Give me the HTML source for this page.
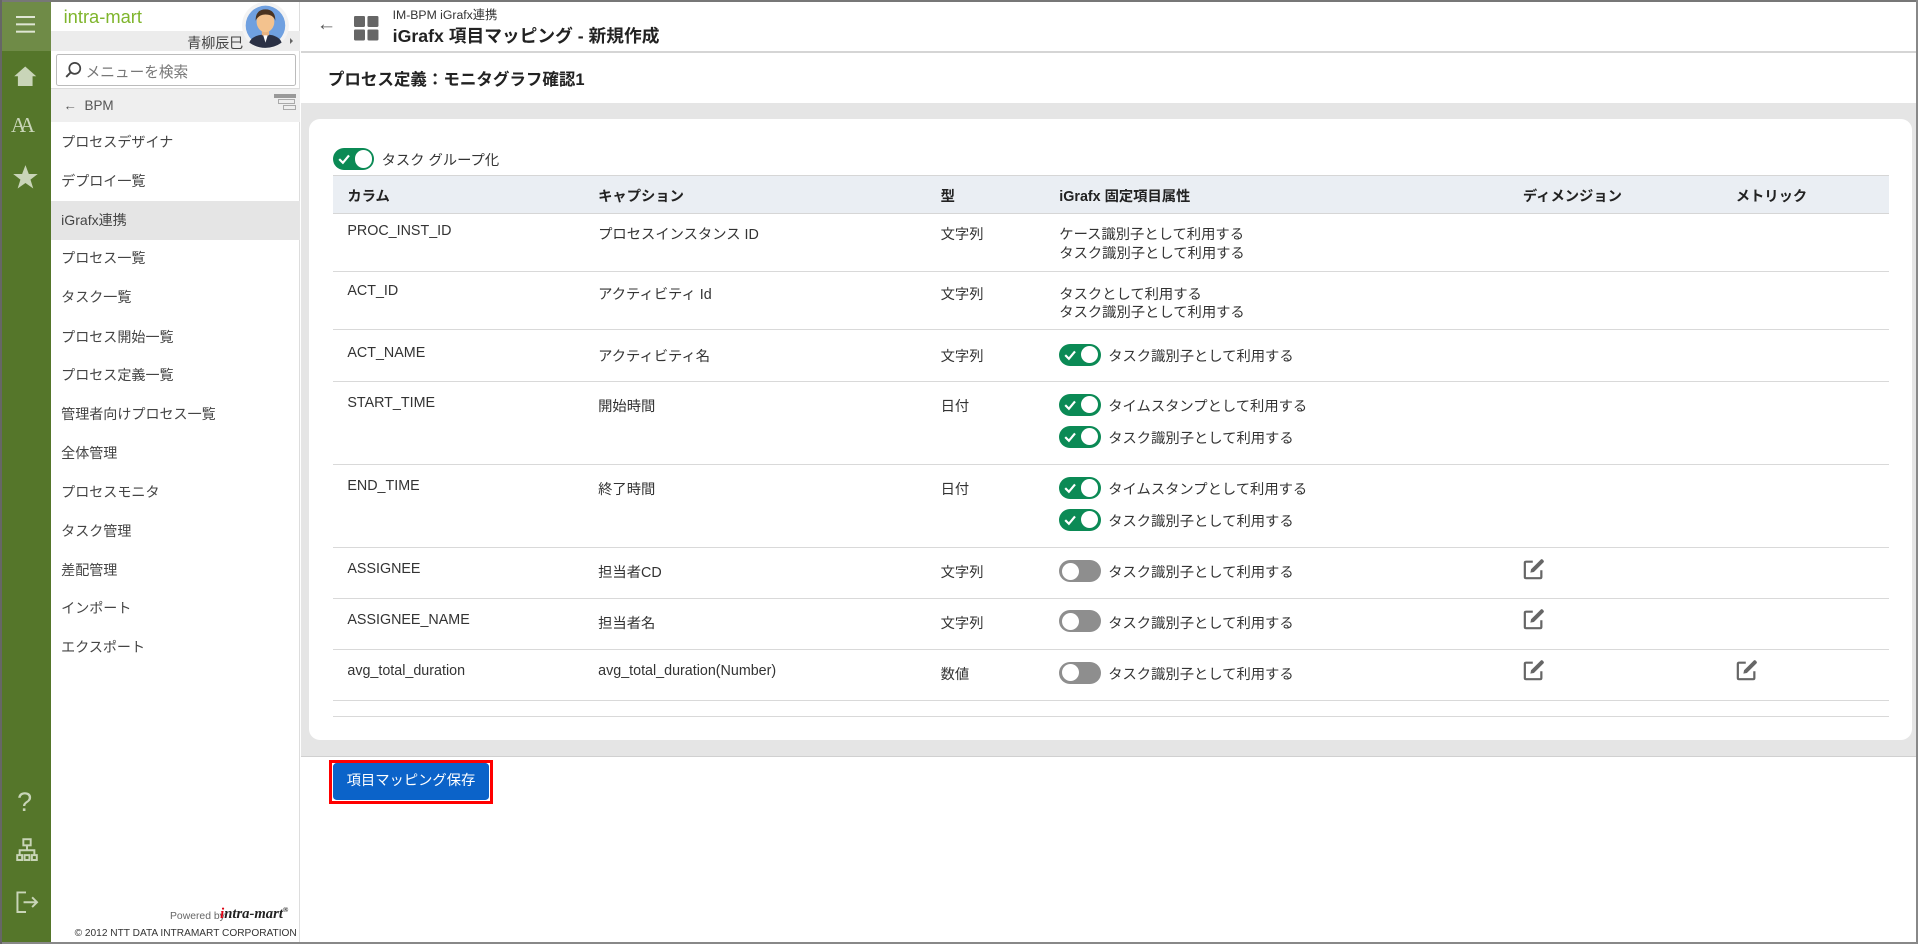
<!DOCTYPE html>
<html><head><meta charset="utf-8">
<style>
*{margin:0;padding:0;box-sizing:border-box}
html,body{width:1918px;height:944px;overflow:hidden;background:#fff}
#z{zoom:1.2232;width:1568px;height:772px;position:relative;font-family:"Liberation Sans","Noto Sans CJK JP",sans-serif;color:#333;font-size:12px}
.a{position:absolute;white-space:nowrap}
.ib{position:absolute;left:0;top:0;width:42px;height:772px;background:#55762a}
.menu{position:absolute;left:50px;font-size:11.5px;color:#444}
.tg{position:absolute;width:34px;height:18px;border-radius:9px;background:#0b8a55}
.tg::after{content:"";position:absolute;right:2px;top:2px;width:14px;height:14px;border-radius:50%;background:#fff}
.tg.off{background:#8e8e8e}
.tg.off::after{right:auto;left:2px}
.tg svg{position:absolute;left:4px;top:4px}
.row{position:absolute;left:272px;width:1272px;border-bottom:1px solid #d9d9d9}
.c{position:absolute;font-size:11.7px;color:#333;white-space:nowrap}
.lbl{position:absolute;font-size:11.7px;color:#333;white-space:nowrap}
</style></head><body><div id="z">
<!-- frame -->
<div class="a" style="left:0;top:0;width:1568px;height:2px;background:#777;z-index:5"></div>
<div class="a" style="left:1566px;top:0;width:2px;height:772px;background:#888;z-index:5"></div>
<div class="a" style="left:0;top:770px;width:1568px;height:2px;background:#888;z-index:5"></div>
<div class="a" style="left:0;top:0;width:2px;height:772px;background:#666;z-index:5"></div>
<!-- icon bar -->
<div class="ib"></div>
<div class="a" style="left:0;top:0;width:42px;height:42px;background:#6f8b47"></div>
<div class="a" style="left:13px;top:13px;width:16px;height:2px;background:#dfe6d4;box-shadow:0 6px 0 #dfe6d4,0 12px 0 #dfe6d4"></div>
<svg class="a" style="left:11px;top:52px" width="20" height="20" viewBox="0 0 20 20"><path d="M10 2 L19 10 H16 V18 H4 V10 H1 Z" fill="#c9d5b8"/></svg>
<div class="a" style="left:9px;top:93px;font-family:'Liberation Serif',serif;font-size:17px;color:#c9d5b8;letter-spacing:-5px">AA</div>
<svg class="a" style="left:10px;top:134px" width="22" height="21" viewBox="0 0 24 23"><path d="M12 1 L15 9 L23 9 L16.5 14 L19 22 L12 17 L5 22 L7.5 14 L1 9 L9 9 Z" fill="#c9d5b8"/></svg>
<div class="a" style="left:14px;top:643px;font-size:22px;color:#c9d5b8">?</div>
<svg class="a" style="left:13px;top:685px" width="18" height="20" viewBox="0 0 18 20"><g fill="none" stroke="#c9d5b8" stroke-width="1.6"><rect x="6" y="1" width="6" height="5"/><rect x="1" y="14" width="4" height="4"/><rect x="7" y="14" width="4" height="4"/><rect x="13" y="14" width="4" height="4"/><path d="M9 6 V10 M3 14 V10 H15 V14"/></g></svg>
<svg class="a" style="left:12px;top:728px" width="20" height="20" viewBox="0 0 20 20"><g fill="none" stroke="#c9d5b8" stroke-width="1.6"><path d="M9 2 H2 V18 H9"/><path d="M7 10 H18 M14 6 L18 10 L14 14"/></g></svg>
<!-- sidebar -->
<div class="a" style="left:42px;top:0;width:203px;height:772px;background:#fff;border-right:1px solid #ddd"></div>
<div class="a" style="left:52px;top:5px;font-size:15px;color:#7fb52c">intra-mart</div>
<div class="a" style="left:42px;top:25px;width:203px;height:17px;background:#ececec"></div>
<div class="a" style="left:153px;top:27px;font-size:11.5px;color:#444">青柳辰巳</div>
<div class="a" style="left:237px;top:31px;width:0;height:0;border-left:3px solid #666;border-top:3px solid transparent;border-bottom:3px solid transparent"></div>
<svg class="a" style="left:197px;top:1px" width="40" height="40" viewBox="0 0 47 47"><circle cx="23.5" cy="23.5" r="22.5" fill="#f3f3f3"/><circle cx="23.5" cy="23.5" r="19" fill="#6fa0e0"/><path d="M8 40 Q10 33 23.5 32 Q37 33 39 40 Q32 45 23.5 45 Q15 45 8 40Z" fill="#2b3145"/><path d="M21 32 L23.5 40 L26 32Z" fill="#fff"/><rect x="20" y="26" width="7" height="7" fill="#e8b27f"/><ellipse cx="23.5" cy="20" rx="8.5" ry="10" fill="#f3c28e"/><path d="M14 19 Q14 8 23.5 8 Q33 8 33 19 Q31 13 23.5 13 Q17 13 14 19Z" fill="#4a3320"/></svg>
<div class="a" style="left:46px;top:44px;width:196px;height:26px;border:1px solid #bbb;border-radius:2px;background:#fff"></div>
<svg class="a" style="left:53px;top:50px" width="14" height="14" viewBox="0 0 14 14"><circle cx="8" cy="6" r="4.5" fill="none" stroke="#444" stroke-width="1.4"/><path d="M4.8 9.2 L1 13" stroke="#444" stroke-width="1.6"/></svg>
<div class="a" style="left:70px;top:50px;font-size:12px;color:#777">メニューを検索</div>
<div class="a" style="left:42px;top:72px;width:203px;height:28px;background:#efefef;border-top:1px solid #ddd"></div>
<div class="a" style="left:52px;top:80px;font-size:11px;color:#555">←&nbsp;&nbsp;BPM</div>
<div class="a" style="left:224px;top:77px;width:18px;height:3px;background:#999"></div>
<div class="a" style="left:227px;top:81px;width:14px;height:4px;border:1px solid #aaa"></div>
<div class="a" style="left:231px;top:86px;width:11px;height:4px;border:1px solid #aaa"></div>
<div class="a" style="left:42px;top:164px;width:203px;height:32px;background:#e5e5e5"></div>
<div class="menu" style="top:108px">プロセスデザイナ</div>
<div class="menu" style="top:140px">デプロイ一覧</div>
<div class="menu" style="top:172px">iGrafx連携</div>
<div class="menu" style="top:203px">プロセス一覧</div>
<div class="menu" style="top:235px">タスク一覧</div>
<div class="menu" style="top:267px">プロセス開始一覧</div>
<div class="menu" style="top:298px">プロセス定義一覧</div>
<div class="menu" style="top:330px">管理者向けプロセス一覧</div>
<div class="menu" style="top:362px">全体管理</div>
<div class="menu" style="top:394px">プロセスモニタ</div>
<div class="menu" style="top:426px">タスク管理</div>
<div class="menu" style="top:458px">差配管理</div>
<div class="menu" style="top:489px">インポート</div>
<div class="menu" style="top:521px">エクスポート</div>
<div class="a" style="left:139px;top:745px;font-size:8.5px;color:#666">Powered by</div>
<div class="a" style="left:180px;top:740px;font-family:'Liberation Serif',serif;font-weight:bold;font-style:italic;font-size:12px;color:#222"><span style="color:#d01">i</span>ntra-mart<sup style="font-size:6px">®</sup></div>
<div class="a" style="left:61px;top:759px;font-size:8.3px;color:#333">© 2012 NTT DATA INTRAMART CORPORATION</div>
<!-- header -->
<div class="a" style="left:246px;top:42px;width:1320px;height:1px;background:#d5d5d5"></div>
<div class="a" style="left:259px;top:11px;font-size:16px;color:#555">←</div>
<div class="a" style="left:289px;top:13px;width:9px;height:9px;background:#666;border-radius:1px;box-shadow:11px 0 0 #666,0 11px 0 #666,11px 11px 0 #666"></div>
<div class="a" style="left:321px;top:4px;font-size:10px;color:#333">IM-BPM iGrafx連携</div>
<div class="a" style="left:321px;top:18px;font-size:14.5px;font-weight:bold;color:#222">iGrafx 項目マッピング - 新規作成</div>
<div class="a" style="left:268px;top:54px;font-size:13.5px;font-weight:bold;color:#222">プロセス定義：モニタグラフ確認1</div>
<!-- grey area -->
<div class="a" style="left:246px;top:84px;width:1320px;height:534px;background:#e5e5e5"></div>
<div class="a" style="left:246px;top:618px;width:1320px;height:1px;background:#d0d0d0"></div>
<div class="a" style="left:253px;top:97px;width:1310px;height:508px;background:#fff;border-radius:9px"></div>
<div class="tg" style="left:272px;top:121px"><svg width="10" height="10" viewBox="0 0 10 10"><path d="M1 5 L4 8 L9 2" fill="none" stroke="#fff" stroke-width="1.8"/></svg></div>
<div class="lbl" style="left:312px;top:122px">タスク グループ化</div>
<!-- table header -->
<div class="a" style="left:272px;top:143px;width:1272px;height:32px;background:#eaeef3;border-top:1px solid #d6d6d6;border-bottom:1px solid #d6d6d6"></div>
<div class="c" style="left:284px;top:151px;font-weight:bold;color:#222">カラム</div>
<div class="c" style="left:489px;top:151px;font-weight:bold;color:#222">キャプション</div>
<div class="c" style="left:769px;top:151px;font-weight:bold;color:#222">型</div>
<div class="c" style="left:866px;top:151px;font-weight:bold;color:#222">iGrafx 固定項目属性</div>
<div class="c" style="left:1245px;top:151px;font-weight:bold;color:#222">ディメンジョン</div>
<div class="c" style="left:1419px;top:151px;font-weight:bold;color:#222">メトリック</div>
<!-- rows -->
<div class="row" style="top:174px;height:48px"></div>
<div class="c" style="left:284px;top:182px">PROC_INST_ID</div><div class="c" style="left:489px;top:182px">プロセスインスタンス ID</div><div class="c" style="left:769px;top:182px">文字列</div>
<div class="c" style="left:866px;top:182px">ケース識別子として利用する</div><div class="c" style="left:866px;top:198px">タスク識別子として利用する</div>
<div class="row" style="top:221px;height:49px"></div>
<div class="c" style="left:284px;top:231px">ACT_ID</div><div class="c" style="left:489px;top:231px">アクティビティ Id</div><div class="c" style="left:769px;top:231px">文字列</div>
<div class="c" style="left:866px;top:231px">タスクとして利用する</div><div class="c" style="left:866px;top:246px">タスク識別子として利用する</div>
<div class="row" style="top:269px;height:43px"></div>
<div class="c" style="left:284px;top:282px">ACT_NAME</div><div class="c" style="left:489px;top:282px">アクティビティ名</div><div class="c" style="left:769px;top:282px">文字列</div>
<div class="tg" style="left:866px;top:281px"><svg width="10" height="10" viewBox="0 0 10 10"><path d="M1 5 L4 8 L9 2" fill="none" stroke="#fff" stroke-width="1.8"/></svg></div><div class="c" style="left:906px;top:282px">タスク識別子として利用する</div>
<div class="row" style="top:311px;height:69px"></div>
<div class="c" style="left:284px;top:323px">START_TIME</div><div class="c" style="left:489px;top:323px">開始時間</div><div class="c" style="left:769px;top:323px">日付</div>
<div class="tg" style="left:866px;top:322px"><svg width="10" height="10" viewBox="0 0 10 10"><path d="M1 5 L4 8 L9 2" fill="none" stroke="#fff" stroke-width="1.8"/></svg></div><div class="c" style="left:906px;top:323px">タイムスタンプとして利用する</div>
<div class="tg" style="left:866px;top:348px"><svg width="10" height="10" viewBox="0 0 10 10"><path d="M1 5 L4 8 L9 2" fill="none" stroke="#fff" stroke-width="1.8"/></svg></div><div class="c" style="left:906px;top:349px">タスク識別子として利用する</div>
<div class="row" style="top:379px;height:69px"></div>
<div class="c" style="left:284px;top:391px">END_TIME</div><div class="c" style="left:489px;top:391px">終了時間</div><div class="c" style="left:769px;top:391px">日付</div>
<div class="tg" style="left:866px;top:390px"><svg width="10" height="10" viewBox="0 0 10 10"><path d="M1 5 L4 8 L9 2" fill="none" stroke="#fff" stroke-width="1.8"/></svg></div><div class="c" style="left:906px;top:391px">タイムスタンプとして利用する</div>
<div class="tg" style="left:866px;top:416px"><svg width="10" height="10" viewBox="0 0 10 10"><path d="M1 5 L4 8 L9 2" fill="none" stroke="#fff" stroke-width="1.8"/></svg></div><div class="c" style="left:906px;top:417px">タスク識別子として利用する</div>
<div class="row" style="top:447px;height:43px"></div>
<div class="c" style="left:284px;top:459px">ASSIGNEE</div><div class="c" style="left:489px;top:459px">担当者CD</div><div class="c" style="left:769px;top:459px">文字列</div>
<div class="tg off" style="left:866px;top:458px"></div><div class="c" style="left:906px;top:459px">タスク識別子として利用する</div>
<div class="row" style="top:489px;height:42px"></div>
<div class="c" style="left:284px;top:500px">ASSIGNEE_NAME</div><div class="c" style="left:489px;top:500px">担当者名</div><div class="c" style="left:769px;top:500px">文字列</div>
<div class="tg off" style="left:866px;top:499px"></div><div class="c" style="left:906px;top:500px">タスク識別子として利用する</div>
<div class="row" style="top:530px;height:43px"></div>
<div class="c" style="left:284px;top:542px">avg_total_duration</div><div class="c" style="left:489px;top:542px">avg_total_duration(Number)</div><div class="c" style="left:769px;top:542px">数値</div>
<div class="tg off" style="left:866px;top:541px"></div><div class="c" style="left:906px;top:542px">タスク識別子として利用する</div>
<div class="row" style="top:572px;height:14px"></div>
<!-- edit icons -->
<svg class="a" style="left:1245px;top:456px" width="19" height="18" viewBox="0 0 19 18"><path d="M8 3 H2.5 Q1.5 3 1.5 4 V15.5 Q1.5 16.5 2.5 16.5 H14 Q15 16.5 15 15.5 V10" fill="none" stroke="#666" stroke-width="1.8"/><path d="M6 12 L6.6 9.2 L14.5 1.3 Q15.3 0.6 16.1 1.3 L16.8 2 Q17.5 2.8 16.8 3.6 L8.9 11.4 Z" fill="#666"/></svg>
<svg class="a" style="left:1245px;top:497px" width="19" height="18" viewBox="0 0 19 18"><path d="M8 3 H2.5 Q1.5 3 1.5 4 V15.5 Q1.5 16.5 2.5 16.5 H14 Q15 16.5 15 15.5 V10" fill="none" stroke="#666" stroke-width="1.8"/><path d="M6 12 L6.6 9.2 L14.5 1.3 Q15.3 0.6 16.1 1.3 L16.8 2 Q17.5 2.8 16.8 3.6 L8.9 11.4 Z" fill="#666"/></svg>
<svg class="a" style="left:1245px;top:539px" width="19" height="18" viewBox="0 0 19 18"><path d="M8 3 H2.5 Q1.5 3 1.5 4 V15.5 Q1.5 16.5 2.5 16.5 H14 Q15 16.5 15 15.5 V10" fill="none" stroke="#666" stroke-width="1.8"/><path d="M6 12 L6.6 9.2 L14.5 1.3 Q15.3 0.6 16.1 1.3 L16.8 2 Q17.5 2.8 16.8 3.6 L8.9 11.4 Z" fill="#666"/></svg>
<svg class="a" style="left:1419px;top:539px" width="19" height="18" viewBox="0 0 19 18"><path d="M8 3 H2.5 Q1.5 3 1.5 4 V15.5 Q1.5 16.5 2.5 16.5 H14 Q15 16.5 15 15.5 V10" fill="none" stroke="#666" stroke-width="1.8"/><path d="M6 12 L6.6 9.2 L14.5 1.3 Q15.3 0.6 16.1 1.3 L16.8 2 Q17.5 2.8 16.8 3.6 L8.9 11.4 Z" fill="#666"/></svg>
<!-- button -->
<div class="a" style="left:269px;top:621px;width:134px;height:36px;border:2.5px solid #f00;background:#fff"></div>
<div class="a" style="left:272px;top:624px;width:128px;height:30px;background:#0b63c9;border-radius:3px;color:#fff;font-size:11.7px;text-align:center;line-height:30px">項目マッピング保存</div>
</div></body></html>
